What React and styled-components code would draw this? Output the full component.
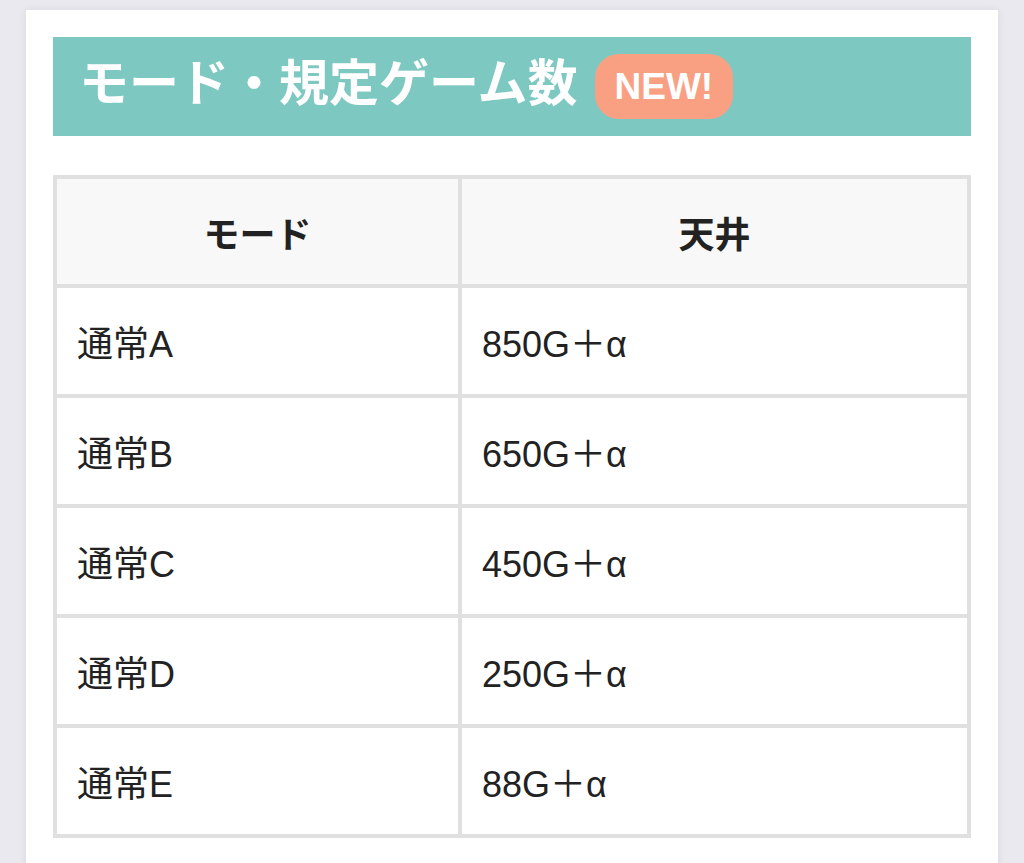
import React from "react";
import styled, { createGlobalStyle } from "styled-components";

const GlobalStyle = createGlobalStyle`
  html, body {
    margin: 0;
    padding: 0;
    background-color: #e9e9ef;
  }
  body {
    font-family: "Liberation Sans", "Noto Sans CJK JP", sans-serif;
    color: #222;
  }
`;

const Page = styled.div`
  padding: 10px 26px 0 26px;
  height: 863px;
  box-sizing: border-box;
  overflow: hidden;
`;

const Card = styled.div`
  background-color: white;
  padding: 27px 27px 40px;
  min-height: 900px;
  box-sizing: border-box;
  box-shadow: 0 0 8px rgba(0, 0, 0, 0.07);
`;

const Heading = styled.h2`
  margin: 0;
  height: 99px;
  box-sizing: border-box;
  padding: 0 0 0 26px;
  display: flex;
  align-items: center;
  gap: 17px;
  background-color: #7ec8c2;
  color: white;
  font-size: 50px;
  font-weight: 700;
  line-height: 1;
`;

const HeadingText = styled.span`
  position: relative;
  top: -3px;
`;

const Badge = styled.span`
  display: inline-flex;
  align-items: center;
  height: 65px;
  padding: 0 20px;
  border-radius: 24px;
  background-color: #f9a083;
  color: white;
  font-family: "Liberation Sans", Arial, sans-serif;
  font-size: 37px;
  font-weight: 700;
`;

const Table = styled.table`
  margin-top: 39px;
  width: 100%;
  border-collapse: separate;
  border-spacing: 0;
  border: 2px solid #e0e0e0;
  font-size: 36px;
`;

const HeadCell = styled.th`
  width: ${(p) => p.$width || "auto"};
  height: 109px;
  box-sizing: border-box;
  border: 2px solid #e0e0e0;
  background-color: #f8f8f8;
  text-align: center;
  font-weight: 700;
  color: #222;
`;

const Cell = styled.td`
  height: 110px;
  box-sizing: border-box;
  padding: 0 20px;
  border: 2px solid #e0e0e0;
  background-color: white;
  color: #222;
`;

const rows = [
  { mode: "通常A", ceiling: "850G＋α" },
  { mode: "通常B", ceiling: "650G＋α" },
  { mode: "通常C", ceiling: "450G＋α" },
  { mode: "通常D", ceiling: "250G＋α" },
  { mode: "通常E", ceiling: "88G＋α" },
];

const App = () => {
  return (
    <>
      <GlobalStyle />
      <Page>
        <Card>
          <Heading>
            <HeadingText>モード・規定ゲーム数</HeadingText>
            <Badge>NEW!</Badge>
          </Heading>
          <Table>
            <thead>
              <tr>
                <HeadCell $width="44.3%">モード</HeadCell>
                <HeadCell>天井</HeadCell>
              </tr>
            </thead>
            <tbody>
              {rows.map((row) => (
                <tr key={row.mode}>
                  <Cell>{row.mode}</Cell>
                  <Cell>{row.ceiling}</Cell>
                </tr>
              ))}
            </tbody>
          </Table>
        </Card>
      </Page>
    </>
  );
};

export default App;
